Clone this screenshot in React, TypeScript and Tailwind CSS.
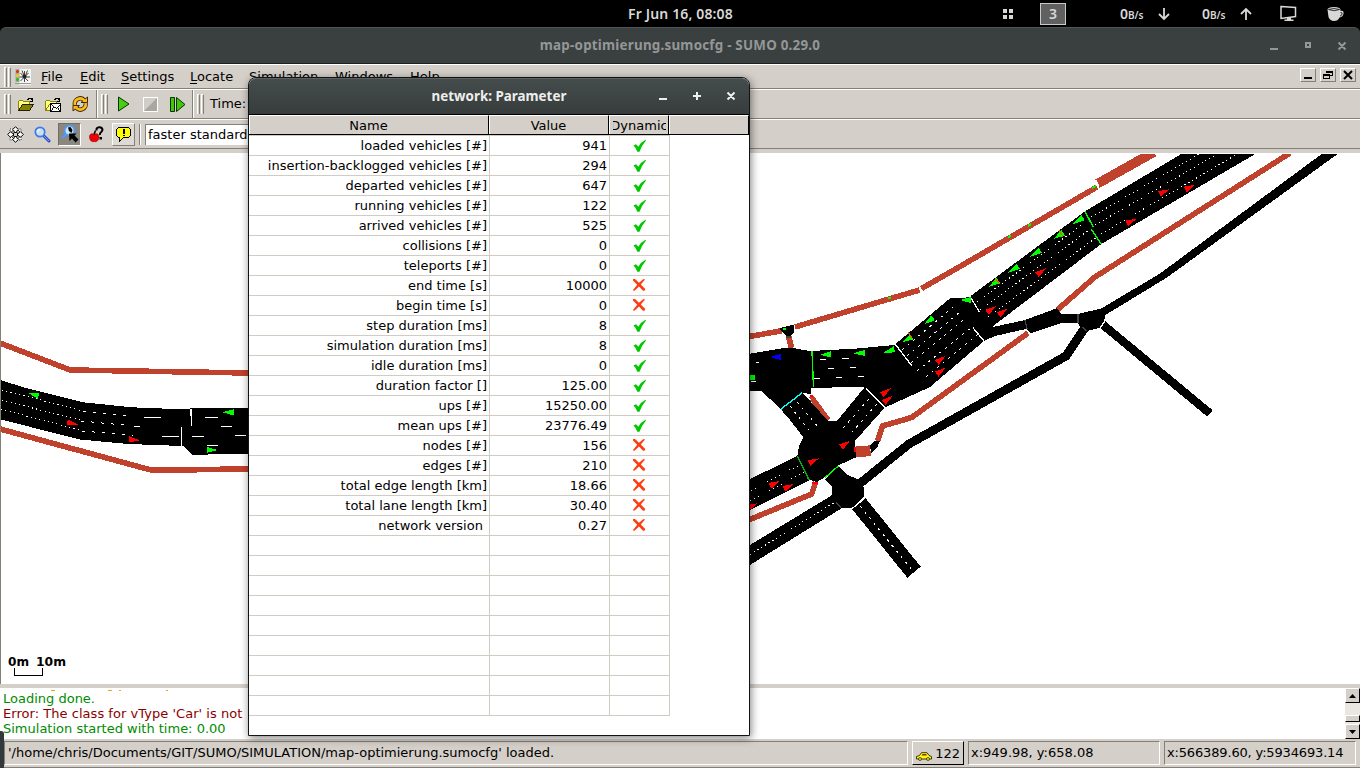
import React from "react";

const SANS = "font-['DejaVu_Sans','Liberation_Sans',sans-serif]";
const NOTO = "font-['Noto_Sans','Open_Sans',sans-serif]";

type Row = [string, string, boolean];
const rows: Row[] = [
  ["loaded vehicles [#]", "941", true],
  ["insertion-backlogged vehicles [#]", "294", true],
  ["departed vehicles [#]", "647", true],
  ["running vehicles [#]", "122", true],
  ["arrived vehicles [#]", "525", true],
  ["collisions [#]", "0", true],
  ["teleports [#]", "0", true],
  ["end time [s]", "10000", false],
  ["begin time [s]", "0", false],
  ["step duration [ms]", "8", true],
  ["simulation duration [ms]", "8", true],
  ["idle duration [ms]", "0", true],
  ["duration factor []", "125.00", true],
  ["ups [#]", "15250.00", true],
  ["mean ups [#]", "23776.49", true],
  ["nodes [#]", "156", false],
  ["edges [#]", "210", false],
  ["total edge length [km]", "18.66", false],
  ["total lane length [km]", "30.40", false],
  ["network version\u00a0", "0.27", false],
];

function Check() {
  return (
    <svg width="14" height="14" viewBox="0 0 14 14">
      <path d="M0.500 6.500 L3 5.200 L5.300 7.800 Q8 3 12.500 0.800 L13 1.500 Q9 6 6.500 12.800 L4.300 12.800 Q3.300 9 0.500 6.500Z" fill="#00c800" />
    </svg>
  );
}
function Cross() {
  return (
    <svg className="mr-[2px] mb-[2px]" width="14" height="14" viewBox="0 0 14 14">
      <path d="M1 1 L3 1 L7 4.800 L11.500 1 L13 1.500 L8.800 6.400 L13.300 11 L12.500 12.700 L11 12.700 L7 8.500 L2.500 12.700 L0.800 12.300 L5.200 6.800 L1 2.400Z" fill="#ff3c10" />
    </svg>
  );
}

/* ---------- map ---------- */
const G = "#00ff00";
const R = "#ff0000";
const BIKE = "#c0422c";
function Car({ x, y, a, c = G, l = 11 }: { x: number; y: number; a: number; c?: string; l?: number }) {
  return <polygon points={`0,0 -${l},-3.2 -${l},3`} fill={c} transform={`translate(${x} ${y}) rotate(${a})`} />;
}

const bikePaths = [
  "0,343 70,370 250,373",
  "0,429 151,470 180,470 250,468.8",
  "745,337.3 782,330.7",
  "795,327 919.5,290",
  "921.5,288.5 960,266.5 1097,187",
  "788.5,336 791.5,348",
  "1057.7,309.5 1095,277 1290,153",
  "1028,333 911.7,417.5 882.5,426 877.5,441",
  "745,521.5 811.7,494 815.7,482",
  "810.7,396.5 828,420",
];
const fine = [
  "2,390 83,411", "2,400.3 80,420", "1,409.3 81,430.3",
  "1091,217 1201,153", "1095,225 1219,153", "1101,234 1239,153",
  "977,302 1083,224", "980,310 1089,230", "988,317 1097,237",
  "750,554.5 835,502",
  "767,482 781,475", "769,491 783,484", "789,470 803,464", "791,479 805,472", "751,491 759,487", "750,501 762,495",
];
const mid = [
  "83,411 131,416.3", "81,421 131,425.7", "82,431 133,435.3",
];
const lanes = [
  "902,350 953,307", "907,356 960,312", "911,363 967,317", "917,371 972,327", "926,377 978,334",
  "860,506 912,570",
  "790,406 812,434", "797,402 818,427", "869,399 843,428", "877,404 852,432",
];
const marks = [
  "M144 417.5H161M134 426.5H140M162 436.5H179M192 436.5H204M205 417.5H218M221 426.5H232M235 435.5H246M207 445.5H218",
  "M820 359.5H826M842 358.5H849M828 368.5H834M850 367.5H856M814 378.5H820M836 377.5H842M858 376.5H864M756 362.5H759M751 381.5H756",
  "M181.5 427V446M191.5 409V426M190.5 409V416",
].join("");

function NetworkMap() {
  return (
    <svg className="block h-[531px] w-[1359px]" viewBox="1 153 1359 531" shapeRendering="crispEdges">
      <rect x="1" y="153" width="1359" height="531" fill="#fff" />
      <g fill="none" stroke={BIKE} strokeWidth="5.6">
        {bikePaths.map((p) => <polyline key={p} points={p} />)}
        <line x1="1097" y1="184" x2="1154" y2="152" strokeWidth="9.5" />
      </g>
      <polygon fill={BIKE} points="854,446.7 870,445.3 871,456 856,457.5" />
      <g fill="#000">
        <polygon points="0,380 25,387.7 83,402.3 132,407.3 167,408.7 250,408 250,454 192,454.7 183,446 128,444 80,439.5 0,419.3" />
        <path fillRule="evenodd" d="M745 354.5L782 348.3L793 348L810 351L855 348.7L894.3 345L950 298.3L970.7 297.3L971 295.7L1085 211.3L1183 153L1257 153L1101.3 244L993 326L984 341L930 387L885 407.5L865 429.7L855 441L856 457.3L839 465L823.3 478.3L816.7 482L810 480L745 512.5L745 481.5L797.3 456L799.3 445L803.3 437.3L790 420L780.7 409.3L761.7 391L745 391ZM811 388L865 386.7L837 421L828 421L803 393L811 394Z" />
        <polygon points="780,328 794.3,324.3 795,331.7 790,336 786.7,336.5 781,331" />
        <polygon points="984,334 993,327 1025,320 1056.7,308.3 1061,313.5 1078,314 1101.7,308.3 1160,273.5 1323,153 1339,153 1166.7,277.7 1105.3,315 1104,321.7 1100,327.7 1087.3,331 1080,326.7 1078,323 1061,323 1031,333.3 1026,329 995,336 984,341" />
        <polygon points="874,441 880,441 877,448 871,453 870,445" />
        <polygon points="825,479.3 838.3,466 847.3,475 860,480 864.3,488.3 864,496.7 851.7,508.3 841.7,508.3 745,568 745,548 832.3,495 832.3,486.7" />
        <polygon points="852.3,509.3 865.7,498.3 920.7,566.7 907.3,577.7" />
      </g>
      <g fill="none" stroke="#000">
        <polyline points="1084,329 1066,356 909,444 858,485" strokeWidth="8.8" />
        <polyline points="1102,324 1210,413.5" strokeWidth="8.4" />
      </g>
      <g fill="none" stroke="#fff" strokeWidth="1">
        {fine.map((p) => <polyline key={p} points={p} strokeDasharray="1.2 3.2" />)}
        {mid.map((p) => <polyline key={p} points={p} strokeDasharray="3 7" />)}
        {lanes.map((p) => <polyline key={p} points={p} strokeDasharray="2.4 4.8" />)}
        <path d={marks} />
      </g>
      <g fill="none" stroke="#fff" strokeWidth="1.3">
        <path d="M895 344L912 366M973 327.7L984.5 341.5M970 296.5L979.5 312M866 388.3L885 407.3M851.5 509L865 498M1096 180L1099 187M1100 328L1104.5 321.5M794.5 325V332M920 287L921 291M803 393L811 400" />
      </g>
      <g fill="none" strokeWidth="1.4">
        <path d="M780.7 409.3L802.3 392.7" stroke="#00ffff" />
        <path d="M812 351L813.5 387.5M1085 211.3L1093.3 227.3M1091.3 229.3L1101.3 244M825 477.7L838.3 466" stroke={G} />
        <path d="M797.3 456L809 480" stroke="#00b418" />
        <path d="M1025 320L1027 329M1078 314V323M836 502L841 508M1082 327L1087 331M786 337H791" stroke="#444" />
      </g>
      <g>
        <Car x={28} y={393} a={194} />
        <Car x={78} y={424.5} a={10} c={R} />
        <Car x={140} y={440.3} a={4} c={R} />
        <Car x={222} y={412.3} a={180} l={12} />
        <Car x={217.5} y={450} a={0} />
        <Car x={770} y={357} a={180} c="#0000ff" />
        <rect x="750" y="375" width="5" height="5" fill={G} />
        <Car x={820} y={354.7} a={178} />
        <Car x={853} y={353.3} a={178} l={12} />
        <Car x={883} y={353} a={162} l={12} />
        <Car x={924.3} y={324.3} a={143} />
        <Car x={902.3} y={342.3} a={149} />
        <Car x={960} y={300} a={180} />
        {[[1073, 224], [1053, 239.3], [1030, 256.7], [1008, 272.7], [988.3, 287]].map(([x, y]) => <Car key={x} x={x} y={y} a={147} l={12} />)}
        {[[890.7, 388.3], [892.7, 396], [945.7, 356], [945.7, 367.7], [996, 306], [1007.7, 308.5], [1046, 268.3], [850, 440.7]].map(([x, y]) => <Car key={`${x}-${y}`} x={x} y={y} a={-36} c={R} />)}
        {[[1136.7, 218.7], [1169.3, 189.3], [1195.3, 184.7], [819, 458.3], [780, 481], [794, 484], [757.5, 503.3]].map(([x, y]) => <Car key={x} x={x} y={y} a={-26} c={R} />)}
        <path d="M888 298h3M1092 188l4-2M1028 226l3-2M1008 237l3-1M783 329h3" stroke={G} strokeWidth="2" />
        <path d="M1059 230l4 7M995 278l5 6M908 332l4 6M993 281l2 1" stroke="#ff5500" strokeWidth="1" />
        <path d="M812 483h6M854.5 447v5M810 396h3" stroke={R} strokeWidth="2" />
      </g>
      <rect x="1" y="153" width="1359" height="1" fill="#fff" />
      <path d="M14.500 668v7.500h28V668" fill="none" stroke="#000" />
      <g className={SANS} fontSize="12" fontWeight="700" fill="#000">
        <text x="8" y="665.500" textLength="21" lengthAdjust="spacingAndGlyphs">0m</text>
        <text x="36" y="665.500" textLength="30" lengthAdjust="spacingAndGlyphs">10m</text>
      </g>
    </svg>
  );
}

/* ---------- toolbar glyphs ---------- */
function Grip() {
  return (
    <div className="flex h-[20px] w-[7px] shrink-0 gap-[1px]">
      <div className="w-[3px] border-t border-r border-l border-t-white border-r-[#848078] border-l-white" />
      <div className="w-[3px] border-t border-r border-l border-t-white border-r-[#848078] border-l-white" />
    </div>
  );
}
function Sep() {
  return <div className="h-full w-[2px] shrink-0 border-r border-l border-r-white border-l-[#848078]" />;
}
function FolderIcon({ save }: { save?: boolean }) {
  return (
    <svg width="17" height="16" viewBox="0 0 17 16" shapeRendering="crispEdges">
      <path d="M9 3.500h1v-1h3v1h1v1M14.500 2v3.500h-3" fill="none" stroke="#000" />
      <path d="M0.500 14V5.500L1.500 4.500H4.500l1 1h5.500V8.500" fill="#ffff80" stroke="#8a8400" />
      <path d="M0.500 14.500L4.500 8.500H15.500L11.500 14.500Z" fill={save ? "#ffff80" : "#848000"} stroke={save ? "#8a8400" : "#222000"} />
      {save && <><rect x="5.500" y="7.500" width="10" height="8" fill="#fff" stroke="#000" /><path d="M6 8l4.500 4 4.500-4M6 15l3-4M15 15l-3-4M9 7.500h3" fill="none" stroke="#000" strokeWidth="0.900" /></>}
    </svg>
  );
}
function ReloadIcon() {
  return (
    <svg width="17" height="16" viewBox="0 0 17 16">
      <g fill="none">
        <path d="M3 9a5.400 5.200 0 0 1 9.500-4.500M13.500 7a5.400 5.200 0 0 1-9.500 4.500" stroke="#3a2800" strokeWidth="4.400" />
      </g>
      <path d="M9 6.500H15.500V1ZM7.500 9.500H1V15Z" fill="#ffba20" stroke="#3a2800" strokeWidth="1" />
      <path d="M3 9a5.400 5.200 0 0 1 9.500-4.500M13.500 7a5.400 5.200 0 0 1-9.500 4.500" fill="none" stroke="#ffba20" strokeWidth="2.600" />
    </svg>
  );
}
function AppIcon() {
  return (
    <svg width="16" height="16" viewBox="0 0 16 16">
      <rect x="4" y="0" width="12" height="16" fill="#f4f4f0" />
      <rect x="0.500" y="0" width="4" height="13" fill="#a8a8a0" />
      <circle cx="2.500" cy="2.500" r="1.500" fill="#f02010" /><circle cx="2.500" cy="6.500" r="1.500" fill="#e8d800" /><circle cx="2.500" cy="10.500" r="1.500" fill="#20c020" />
      <path d="M5.500 4l7.500 8M13.500 4l-8 8M9.500 2v11M7 1.500l2 5M12.500 1.500l-2 5M4.500 8h10.500" stroke="#444" strokeWidth="1" />
      <circle cx="9.500" cy="7.500" r="2" fill="#222" />
      <path d="M0 14.500H16" stroke="#999" />
    </svg>
  );
}
function RecenterIcon() {
  return (
    <svg width="17" height="17" viewBox="0 0 17 17">
      <path d="M8.500 0.700L11.300 3.500L9.800 5L9.800 6.500H7.200L7.200 5L5.700 3.500ZM8.500 16.300L11.300 13.500L9.800 12L9.800 10.500H7.200L7.200 12L5.700 13.500ZM0.700 8.500L3.500 5.700L5 7.200H6.500V9.800H5L3.500 11.300ZM16.300 8.500L13.500 5.700L12 7.200H10.500V9.800H12L13.500 11.300Z" fill="#fff" stroke="#000" />
      <path d="M3 3h2.500v2.500H3zM11.500 3H14v2.500h-2.500zM3 11.500h2.500V14H3zM11.500 11.500H14V14h-2.500z" fill="#fff" stroke="#000" strokeWidth="0.800" strokeDasharray="1 1" />
    </svg>
  );
}
function ZoomIcon() {
  return (
    <svg width="17" height="17" viewBox="0 0 17 17">
      <path d="M9.500 9.500L15 15" stroke="#2850c8" strokeWidth="3" strokeLinecap="round" />
      <path d="M10 10L15 15" stroke="#70a0ff" strokeWidth="1" />
      <circle cx="6" cy="6" r="4.700" fill="#cbe0ee" stroke="#3c78f0" strokeWidth="1.700" />
      <path d="M3.500 6a2.500 2.500 0 0 1 2.500-2.500" stroke="#fff" fill="none" />
    </svg>
  );
}
function LocateIcon() {
  return (
    <svg width="18" height="18" viewBox="0 0 18 18">
      <path d="M5 9L1.500 13" stroke="#4c9cf8" strokeWidth="2.500" />
      <circle cx="8.500" cy="5.500" r="4.800" fill="#d0e4f0" stroke="#4c9cf8" strokeWidth="1.700" />
      <path d="M7 2.500l2.500-0.500l2 3l-1 3l-2.500-2z" fill="#000" />
      <path d="M8 8.500H15.500L13.500 10.500L17.500 14.500L14.500 17.500L11 13.500L8.500 16Z" fill="#000" />
    </svg>
  );
}
function AppleIcon() {
  return (
    <svg width="16" height="17" viewBox="0 0 16 17">
      <path d="M5 8.500C3.500 7 0.500 7.500 0.500 11C0.500 14 2.500 16.500 5 15.500C8 16.500 10 14 10 11C10 7.500 7 7 5 8.500Z" fill="#f00000" stroke="#700000" strokeWidth="0.500" />
      <path d="M5 8.500L6.500 4.500" stroke="#000" strokeWidth="1.500" />
      <path d="M7.500 4.500V3Q8 1.200 10.500 1.200T13.500 3.500Q13.500 5 12 6.200T11 9" fill="none" stroke="#000" strokeWidth="2" />
      <rect x="10.500" y="11" width="2.500" height="2.500" />
    </svg>
  );
}
function BubbleIcon() {
  return (
    <svg width="15" height="15" viewBox="0 0 15 15" shapeRendering="crispEdges">
      <path d="M2.500 0.500h10l2 2v6l-2 2H7.500L3.500 14.500V10.500H2.500l-2-2v-6Z" fill="#ffff00" stroke="#000" />
      <path d="M7.500 2v4.500M7.500 7.800v1.500" stroke="#000" strokeWidth="2" />
    </svg>
  );
}

function MenuItem({ text, w }: { text: string; w: string }) {
  return <div className={`shrink-0 ${w}`}><span className="underline underline-offset-2">{text[0]}</span>{text.slice(1)}</div>;
}
function MdiButton({ children }: { children: React.ReactNode }) {
  return (
    <div className="flex h-[14px] w-[16px] items-center justify-center border border-t-white border-r-[#848078] border-b-[#848078] border-l-white bg-[#d4cfc8]">
      <svg width="12" height="10" viewBox="0 0 12 10" shapeRendering="crispEdges">{children}</svg>
    </div>
  );
}
function ScrollButton({ d }: { d: string }) {
  return (
    <div className="flex h-[15px] w-[15px] shrink-0 items-center justify-center border border-t-white border-r-black border-b-black border-l-white bg-[#d4cfc8]">
      <svg width="7" height="4" viewBox="0 0 7 4"><path d={d} /></svg>
    </div>
  );
}

function Dialog() {
  return (
    <div className="absolute top-[77px] left-[248px] flex h-[659px] w-[502px] flex-col rounded-t-[8px] border border-[#111414] bg-white shadow-[1px_2px_8px_rgba(0,0,0,0.5)]">
      <div className={`flex h-[36px] shrink-0 items-center rounded-t-[7px] border-t border-[#5a6161] bg-linear-to-b from-[#454c4c] to-[#373d3d] text-[13.4px] font-bold text-[#eeeeec] ${NOTO}`}>
        <div className="w-[500px] shrink-0 pb-px text-center">network: Parameter</div>
        <svg className="-mt-[2px] -ml-[93px] shrink-0" width="84" height="16" viewBox="0 0 84 16">
          <path d="M3 11h8M37 8h8M41 4v8M71.500 4.500l7 7M78.500 4.500l-7 7" stroke="#eeeeec" strokeWidth="2" fill="none" />
        </svg>
      </div>
      <div className="flex h-[21px] shrink-0 border-t border-b border-black bg-[#d4cfc8] text-center text-[13px] leading-[19px]">
        <div className="w-[240px] border-t border-r border-l border-t-white border-r-black border-l-white pr-px">Name</div>
        <div className="w-[120px] border-t border-r border-l border-t-white border-r-black border-l-white pr-px">Value</div>
        <div className="flex w-[60px] justify-center border-t border-r border-l border-t-white border-r-black border-l-white">
          <div className="flex w-[53px] shrink-0 justify-center overflow-hidden"><span className="shrink-0">Dynamic</span></div>
        </div>
        <div className="w-[80px] border-t border-r border-l border-t-white border-r-black border-l-white" />
      </div>
      <div className="w-[421px] border-t border-[#d0ccc4] text-right text-[13px] leading-[19px]">
        {Array.from({ length: 29 }, (_, i) => rows[i]).map((r, i) => (
          <div key={i} className="flex h-[20px] border-b border-[#d0ccc4]">
            <div className="w-[241px] border-r border-[#d0ccc4] pr-[2px] whitespace-nowrap">{r?.[0]}</div>
            <div className="w-[120px] border-r border-[#d0ccc4] pr-[2px]">{r?.[1]}</div>
            <div className="flex w-[60px] items-center justify-center border-r border-[#d0ccc4]">{r && (r[2] ? <Check /> : <Cross />)}</div>
          </div>
        ))}
      </div>
    </div>
  );
}

export default function App() {
  return (
    <div className={`relative flex h-[768px] w-[1360px] flex-col overflow-hidden bg-[#d4cfc8] text-[13px] text-black ${SANS}`}>
      <div className={`flex h-[27px] shrink-0 items-center bg-black text-[14px] font-semibold text-[#d8d8d8] ${NOTO}`}>
        <div className="ml-[628px] w-[375px] shrink-0 pb-px tracking-[0.15px]">Fr Jun 16, 08:08</div>
        <svg className="shrink-0" width="10" height="10" viewBox="0 0 10 10"><path d="M0 0h4v4H0zM6 0h4v4H6zM0 6h4v4H0zM6 6h4v4H6z" fill="#d8d8d8" /></svg>
        <div className="ml-[27px] flex h-[22px] w-[26px] shrink-0 items-center justify-center border border-[#c8c8c8] bg-[#606060] text-[14px]">3</div>
        <div className="ml-[54px] w-[38px] shrink-0 whitespace-nowrap">0<span className="text-[10px]">B/s</span></div>
        <svg className="shrink-0" width="12" height="14" viewBox="0 0 12 14"><path d="M6 1v11M1 7l5 5 5-5" fill="none" stroke="#d8d8d8" strokeWidth="1.800" /></svg>
        <div className="ml-[32px] w-[38px] shrink-0 whitespace-nowrap">0<span className="text-[10px]">B/s</span></div>
        <svg className="shrink-0" width="12" height="14" viewBox="0 0 12 14"><path d="M6 13V2M1 7l5-5 5 5" fill="none" stroke="#d8d8d8" strokeWidth="1.800" /></svg>
        <svg className="ml-[28px] shrink-0" width="17" height="17" viewBox="0 0 17 17"><path d="M1 1.500L15.500 2.500V11.500L1 13.500Z" fill="none" stroke="#d8d8d8" strokeWidth="1.500" /><path d="M7 13h4v1.500h2.500V16H4.500v-1.500H7z" fill="#d8d8d8" /></svg>
        <svg className="ml-[30px] shrink-0" width="18" height="16" viewBox="0 0 18 16"><path d="M0.500 3.500Q1 1 7 1T13.500 3.500V5Q17 4 16.500 7.500T12.500 11.500Q11 15 7 15T1.500 11Z" fill="#d8d8d8" /><path d="M1.500 3.500Q7 6 12.500 3.500Q7 1.500 1.500 3.500M13.500 6.500Q15.500 6 15 8T13 10" fill="none" stroke="#222" strokeWidth="0.900" /></svg>
      </div>

      <div className="h-[37px] shrink-0 bg-black">
        <div className={`flex h-[37px] items-center rounded-t-[6px] border-t border-b border-t-[#4e5555] border-b-[#1c2020] bg-[#3a3f3f] text-[13.400px] font-bold text-[#949797] ${NOTO}`}>
          <div className="w-[1360px] shrink-0 pb-px text-center tracking-[0.22px]">map-optimierung.sumocfg - SUMO 0.29.0</div>
          <svg className="-ml-[93px] shrink-0" width="84" height="16" viewBox="0 0 84 16"><path d="M3 11h8M71.500 4.500l7 7M78.500 4.500l-7 7M39 5h4v4h-4z" stroke="#949797" strokeWidth="2" fill="none" /></svg>
        </div>
      </div>

      <div className="flex h-[25px] shrink-0 items-center border-t border-b border-t-white border-b-[#848078] pl-[4px]">
        <Grip />
        <div className="mr-[10px] ml-[4px]"><AppIcon /></div>
        <MenuItem text="File" w="w-[39px]" />
        <MenuItem text="Edit" w="w-[41px]" />
        <MenuItem text="Settings" w="w-[69px]" />
        <MenuItem text="Locate" w="w-[59px]" />
        <MenuItem text="Simulation" w="w-[86px]" />
        <MenuItem text="Windows" w="w-[75px]" />
        <MenuItem text="Help" w="w-[60px]" />
        <div className="mr-[4px] ml-auto flex gap-[4px] pb-[3px]">
          <MdiButton><path d="M2 8h8" stroke="#000" strokeWidth="2" /></MdiButton>
          <MdiButton><path d="M4.500 3V1.500h6v4H8M4 2h7M1.500 4.500h6v4h-6zM1 5h7" fill="none" stroke="#000" /></MdiButton>
          <MdiButton><path d="M2 1l8 8M10 1L2 9" stroke="#000" strokeWidth="2" shapeRendering="auto" /></MdiButton>
        </div>
      </div>

      <div className="flex h-[30px] shrink-0 items-center border-t border-b border-t-white border-b-[#848078] pl-[4px]">
        <Grip />
        <div className="ml-[7px] flex w-[78px] shrink-0 gap-[10px]"><FolderIcon /><FolderIcon save /><ReloadIcon /></div>
        <Sep />
        <div className="ml-[3px]"><Grip /></div>
        <svg className="ml-[8px] shrink-0" width="76" height="18" viewBox="0 0 76 18">
          <path d="M2.500 2L13 9L2.500 16Z" fill="#48d010" stroke="#083000" />
          <rect x="27.500" y="2.500" width="14" height="14" fill="#d0ccc8" stroke="#fff" /><path d="M28 16L41 3V16Z" fill="#aaa69f" />
          <path d="M54.500 2.500h4v14h-4zM60.500 2.500L69 9.500L60.500 16.500Z" fill="#40c808" stroke="#083000" />
        </svg>
        <Sep />
        <div className="ml-[3px]"><Grip /></div>
        <div className="ml-[6px]">Time:</div>
      </div>

      <div className="flex h-[30px] shrink-0 items-center border-t border-b border-t-white border-b-[#848078] pl-[7px]">
        <RecenterIcon />
        <div className="ml-[10px]"><ZoomIcon /></div>
        <div className="ml-[7px] flex h-[23px] w-[23px] items-center justify-center border border-t-[#706c66] border-r-white border-b-white border-l-[#706c66] bg-[#8a8781]"><LocateIcon /></div>
        <div className="ml-[8px]"><AppleIcon /></div>
        <div className="ml-[7px] flex h-[23px] w-[23px] items-center justify-center border border-t-white border-r-[#848078] border-b-[#848078] border-l-white bg-[#dedad4]"><BubbleIcon /></div>
        <div className="ml-[4px] h-[21px] w-[2px] border-r border-l border-r-white border-l-[#848078]" />
        <div className="ml-[4px] h-[21px] w-[200px] border-t border-l border-[#848078] bg-white pl-[2px] leading-[20px] whitespace-nowrap">faster standard</div>
      </div>
      <div className="h-[4px] shrink-0" />

      <div className="h-[531px] shrink-0 border-l border-[#848078]"><NetworkMap /></div>
      <div className="h-[4px] shrink-0 bg-[#d4cfc8]" />

      <div className="flex h-[51px] shrink-0 bg-white">
        <div className="flex-1 overflow-hidden pl-[3px] leading-[15px]">
          <svg className="block" width="240" height="3" viewBox="0 0 240 3"><path d="M48 2.500h4M105 2.500h4M116 2.500h2M163 2.500h2" stroke="#f0a010" /></svg>
          <div className="text-[#008c00]">Loading done.</div>
          <div className="tracking-[0.04px] text-[#8c0000]">Error: The class for vType 'Car' is not</div>
          <div className="text-[#008c00]">Simulation started with time: 0.00</div>
        </div>
        <div className="flex w-[15px] flex-col bg-[#eae7e3]">
          <ScrollButton d="M3.500 0L7 4H0Z" />
          <div className="h-[12px]" />
          <div className="h-[7px] border border-t-white border-r-black border-b-black border-l-white bg-[#d4cfc8]" />
          <div className="h-[2px]" />
          <ScrollButton d="M3.500 4L7 0H0Z" />
        </div>
      </div>

      <div className="flex h-[29px] shrink-0 border-b border-[#848078] pt-[2px] leading-[21px]">
        <div className="-mt-[10px] h-[39px] w-[4px] shrink-0 rounded-tr-[3px] bg-[#33393a]" />
        <div className="h-[24px] w-[904px] shrink-0 border border-t-[#848078] border-r-white border-b-white border-l-[#848078] pl-[3px]">'/home/chris/Documents/GIT/SUMO/SIMULATION/map-optimierung.sumocfg' loaded.</div>
        <div className="ml-[4px] flex h-[24px] w-[52px] shrink-0 items-center justify-between border border-t-white border-r-black border-b-black border-l-white pr-[3px] pl-[3px]">
          <svg className="mt-[7px]" width="16" height="9" viewBox="0 0 16 9"><path d="M0.500 6V4.500L3.500 3.500L5.500 0.700H11L13 3.500L15.500 4.500V7H0.500Z" fill="#ffff00" stroke="#222" strokeWidth="0.900" /><path d="M5.500 3.500L6.500 2H10L11 3.500Z" fill="#a02020" /><circle cx="4" cy="7" r="1.500" fill="#ffd800" stroke="#222" strokeWidth="0.700" /><circle cx="12" cy="7" r="1.500" fill="#ffd800" stroke="#222" strokeWidth="0.700" /></svg>
          122
        </div>
        <div className="ml-[4px] h-[24px] w-[192px] shrink-0 border border-t-[#848078] border-r-white border-b-white border-l-[#848078] pl-[2px]">x:949.98, y:658.08</div>
        <div className="ml-[4px] h-[24px] w-[192px] shrink-0 border border-t-[#848078] border-r-white border-b-white border-l-[#848078] pl-[2px] tracking-[-0.160px]">x:566389.60, y:5934693.14</div>
      </div>

      <Dialog />
    </div>
  );
}
